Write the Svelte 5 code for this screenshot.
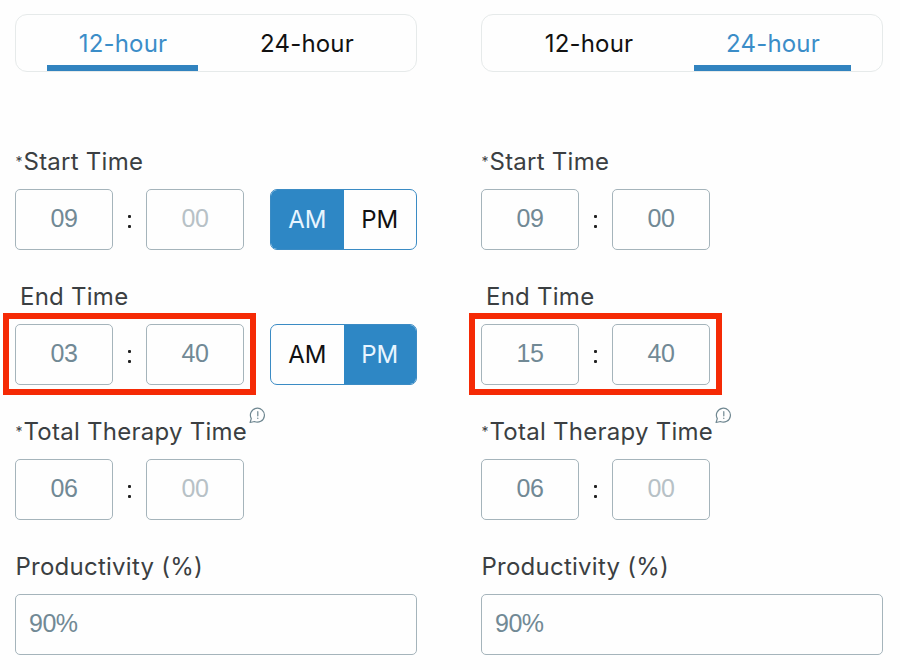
<script>
  const tabs = ['12-hour', '24-hour'];
  const halves = ['AM', 'PM'];
  const panels = [
    {
      active: '12-hour',
      rows: [
        { label: 'Start Time', required: true, h: '09', m: '00', dim: true, half: 'AM' },
        { label: 'End Time', h: '03', m: '40', marked: true, half: 'PM' },
        { label: 'Total Therapy Time', required: true, hint: true, h: '06', m: '00', dim: true },
      ],
    },
    {
      active: '24-hour',
      rows: [
        { label: 'Start Time', required: true, h: '09', m: '00' },
        { label: 'End Time', h: '15', m: '40', marked: true },
        { label: 'Total Therapy Time', required: true, hint: true, h: '06', m: '00', dim: true },
      ],
    },
  ];
</script>

<main>
  {#each panels as panel}
    <section>
      <nav>
        {#each tabs as tab}
          <button class="tab" class:active={panel.active === tab}><span>{tab}</span></button>
        {/each}
      </nav>

      {#each panel.rows as row}
        <div class="field">
          <div class="label" class:indent={!row.required}>
            {#if row.required}<span class="star">*</span>{/if}<span class="name">{row.label}</span>
            {#if row.hint}
              <svg class="hint" width="17" height="17" viewBox="0 0 17 17" fill="none" stroke="#6f8791" stroke-width="1.2" stroke-linejoin="round" stroke-linecap="round">
                <path d="M1.1 15.5 L2.3 11.6 A7 7 0 1 1 5.4 14.5 Z" />
                <path d="M8.8 4.7V8.8M8.8 11.2V11.4" />
              </svg>
            {/if}
          </div>
          <div class="controls">
            <div class="time">
              <div class="box">{row.h}</div>
              <div class="colon"><i></i><i></i></div>
              <div class="box" class:dim={row.dim}>{row.m}</div>
              {#if row.marked}<div class="mark"></div>{/if}
            </div>
            {#if row.half}
              <div class="toggle">
                {#each halves as half}
                  <button class:on={row.half === half}>{half}</button>
                {/each}
              </div>
            {/if}
          </div>
        </div>
      {/each}

      <div class="field">
        <div class="label"><span class="name">Productivity (%)</span></div>
        <div class="box wide">90%</div>
      </div>
    </section>
  {/each}
</main>

<style>
  :global(body) {
    background: #fefefe;
  }
  main {
    box-sizing: border-box;
    width: 900px;
    height: 670px;
    padding: 14px 17px 0 15px;
    display: flex;
    justify-content: space-between;
    overflow: hidden;
    font-family: Inter, 'Liberation Sans', sans-serif;
    font-size: 24px;
    color: #3b3f42;
  }
  section {
    width: 402px;
  }
  button {
    border: 0;
    padding: 0;
    margin: 0;
    background: none;
    font: inherit;
    color: #111;
  }
  nav {
    box-sizing: border-box;
    height: 58px;
    margin-bottom: 43px;
    padding: 0 31px;
    display: flex;
    justify-content: space-between;
    border: 1px solid #e6eaea;
    border-radius: 12px;
  }
  .tab {
    box-sizing: border-box;
    width: 151px;
    height: 56px;
    padding: 7px 0 0 1px;
    border-bottom: 6px solid transparent;
    letter-spacing: 0.2px;
  }
  .tab:last-child {
    width: 157px;
  }
  .tab.active {
    color: #3b8dc8;
    border-color: #3183bf;
  }
  .field {
    height: 135px;
  }
  .label {
    height: 26px;
    padding: 34px 0 14px 0.5px;
    display: flex;
    align-items: center;
    line-height: 26px;
    letter-spacing: 0.25px;
    white-space: nowrap;
  }
  .label.indent {
    padding-left: 5px;
  }
  .star {
    width: 8px;
    font-size: 14px;
    letter-spacing: 0;
  }
  .hint {
    margin: -33px 0 0 2px;
  }
  .controls {
    display: flex;
    gap: 26px;
  }
  .time {
    position: relative;
    display: flex;
  }
  .box {
    box-sizing: border-box;
    width: 98px;
    height: 61px;
    padding-bottom: 2px;
    display: flex;
    align-items: center;
    justify-content: center;
    border: 1px solid #a5b4bb;
    border-radius: 5px;
    font-family: 'Liberation Sans', sans-serif;
    font-size: 25px;
    letter-spacing: -0.3px;
    color: #718995;
  }
  .box.dim {
    color: #b7c1c6;
  }
  .box.wide {
    width: 402px;
    padding-left: 13px;
    justify-content: flex-start;
    letter-spacing: -0.5px;
  }
  .colon {
    width: 33px;
    display: flex;
    flex-direction: column;
    align-items: center;
    justify-content: center;
    gap: 7px;
    padding-top: 4px;
    box-sizing: border-box;
  }
  .colon i {
    width: 3px;
    height: 3px;
    border-radius: 1px;
    background: #222;
  }
  .mark {
    position: absolute;
    inset: -11px -12px -10px -12px;
    border: 6px solid #f52a05;
  }
  .toggle {
    box-sizing: border-box;
    width: 147px;
    height: 61px;
    display: flex;
    border: 1px solid #3b8bc4;
    border-radius: 7px;
    overflow: hidden;
  }
  .toggle button {
    flex: 1;
  }
  .toggle .on {
    background: #2e87c5;
    color: #e8f5ff;
  }
</style>
